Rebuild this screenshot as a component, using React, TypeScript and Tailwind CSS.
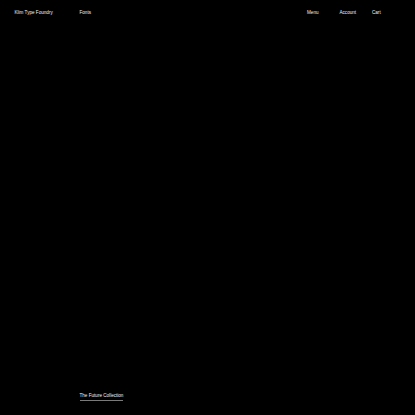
export default function App() {
  return (
    <div
      className="flex h-[415px] w-[415px] flex-col bg-black px-[12.5px] text-[4.6px] leading-none text-[#f2f2f2]"
      style={{ fontFamily: '"Liberation Sans", Arial, sans-serif' }}
    >
      <header className="grid grid-cols-12 pt-[11px]">
        <a className="col-span-2 whitespace-nowrap pl-[2px]">Klim Type Foundry</a>
        <a className="col-span-7 pl-[2px]">Fonts</a>
        <a className="pl-[2px]">Menu</a>
        <a className="pl-[2px]">Account</a>
        <a className="pl-[2px]">Cart</a>
      </header>

      <main className="flex-1" />

      <footer className="grid grid-cols-12 pb-[14px]">
        <div className="col-start-3 col-span-4 pl-[2px]">
          <a className="inline-block whitespace-nowrap border-b border-[#7a7a7a] pb-[1px]">
            The Future Collection
          </a>
        </div>
      </footer>
    </div>
  );
}
